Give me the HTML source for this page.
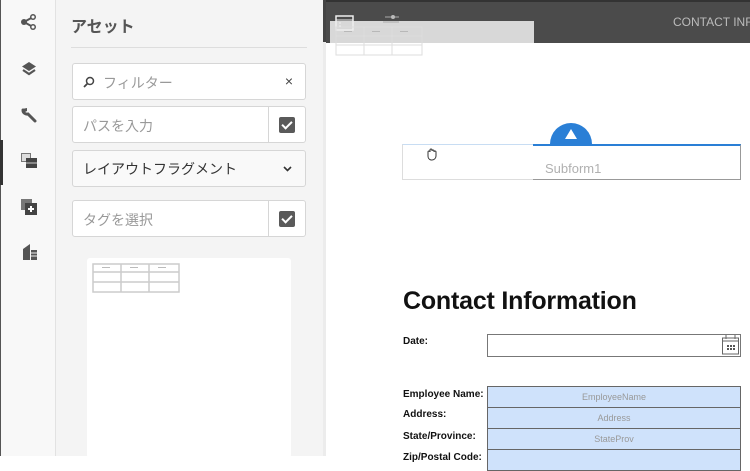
<!DOCTYPE html>
<html><head><meta charset="utf-8"><style>
*{margin:0;padding:0;box-sizing:border-box}
body{width:750px;height:456px;overflow:hidden;position:relative;background:#fff;font-family:"Liberation Sans","Noto Sans CJK JP",sans-serif}
.abs{position:absolute}
.rail{left:0;top:0;width:56px;height:456px;background:#f8f8f8;border-right:1px solid #e2e2e2;border-left:1px solid #555}
.panel{left:56px;top:0;width:267px;height:456px;background:#f4f4f4}
.box{position:absolute;left:72px;width:234px;background:#fff;border:1px solid #d6d6d6;border-radius:3px;font-size:14px;color:#999}
.chk{position:absolute;right:0;top:0;width:37px;height:100%;border-left:1px solid #d6d6d6}
.chk i{position:absolute;left:10px;top:10px;width:16px;height:16px;background:#5a5a5a;border-radius:2px}
.chk i:after{content:"";position:absolute;left:5px;top:2px;width:4px;height:8px;border:solid #fff;border-width:0 2px 2px 0;transform:rotate(45deg)}
.lbl{position:absolute;left:403px;font-size:10px;font-weight:bold;color:#111}
.fld{position:absolute;left:487px;width:254px;height:22px;background:#cfe2fb;border:1px solid #666;font-size:9px;color:#999;text-align:center;line-height:20px}
</style></head><body>
<div class="abs rail"></div>
<div class="abs" style="left:0;top:140px;width:3px;height:45px;background:#333"></div>
<svg class="abs" style="left:20px;top:13px" width="18" height="18" viewBox="0 0 18 18"><g fill="#555"><circle cx="4" cy="9" r="3"/><circle cx="13" cy="4" r="3"/><circle cx="13" cy="14" r="3"/></g><path d="M4 9L13 4M4 9L13 14" stroke="#555" stroke-width="2"/><circle cx="13" cy="4" r="1.5" fill="#f8f8f8"/><circle cx="13" cy="14" r="1.5" fill="#f8f8f8"/></svg>
<svg class="abs" style="left:20px;top:60px" width="18" height="18" viewBox="0 0 18 18"><path d="M9 2L16 6.5L9 11L2 6.5Z" fill="#555"/><path d="M3 10L9 14L15 10" stroke="#555" stroke-width="2.2" fill="none"/></svg>
<svg class="abs" style="left:20px;top:106px" width="18" height="18" viewBox="0 0 18 18"><path d="M3 4a4 4 0 0 0 5 4l7 7" stroke="#555" stroke-width="3" fill="none" stroke-linecap="round"/><path d="M2 3l3 3 2-1 0-3z" fill="#555"/></svg>
<svg class="abs" style="left:20px;top:151px" width="18" height="18" viewBox="0 0 18 18"><rect x="1" y="2" width="10" height="9" fill="#777"/><rect x="2" y="3" width="8" height="7" fill="#ddd"/><rect x="6" y="7" width="11" height="10" fill="#444"/><path d="M6 12H17" stroke="#ccc"/></svg>
<svg class="abs" style="left:20px;top:198px" width="18" height="18" viewBox="0 0 18 18"><rect x="1" y="1" width="11" height="11" fill="#777"/><rect x="5" y="5" width="12" height="12" fill="#444"/><path d="M11 8v6M8 11h6" stroke="#fff" stroke-width="2"/></svg>
<svg class="abs" style="left:22px;top:243px" width="16" height="18" viewBox="0 0 16 18"><path d="M1 6L8 1V17H1Z" fill="#555"/><rect x="9" y="7" width="6" height="10" fill="#555"/><path d="M9 10h6M9 13h6" stroke="#eee"/></svg>

<div class="abs panel"></div>
<div class="abs" style="left:71px;top:13px;font-size:16px;font-weight:bold;color:#555">アセット</div>
<div class="abs" style="left:71px;top:47px;width:236px;height:1px;background:#ddd"></div>
<div class="box" style="top:63px;height:37px">
 <svg class="abs" style="left:10px;top:12px" width="12" height="12" viewBox="0 0 12 12"><circle cx="7" cy="5" r="3.5" stroke="#444" stroke-width="1.5" fill="none"/><path d="M4.5 7.5L1 11" stroke="#444" stroke-width="1.8"/></svg>
 <span class="abs" style="left:30px;top:9px">フィルター</span>
 <span class="abs" style="right:12px;top:9px;color:#444;font-size:14px">×</span>
</div>
<div class="box" style="top:106px;height:37px"><span class="abs" style="left:10px;top:9px">パスを入力</span><div class="chk"><i></i></div></div>
<div class="box" style="top:150px;height:37px;color:#333;background:#f9f9f9"><span class="abs" style="left:10px;top:8px">レイアウトフラグメント</span>
 <svg class="abs" style="right:13px;top:15px" width="9" height="6" viewBox="0 0 9 6"><path d="M1 1l3.5 3.5L8 1" stroke="#333" stroke-width="1.6" fill="none"/></svg></div>
<div class="box" style="top:200px;height:37px"><span class="abs" style="left:10px;top:9px">タグを選択</span><div class="chk"><i></i></div></div>
<div class="abs" style="left:87px;top:258px;width:204px;height:200px;background:#fff;border-radius:3px"></div>
<svg class="abs" style="left:92px;top:263px" width="88" height="30"><g stroke="#ccc" stroke-width="1.5" fill="none"><rect x="1" y="1" width="86" height="28"/><path d="M1 9H87M1 19H87M29 1V29M57 1V29"/></g><g fill="#bbb"><rect x="10" y="4" width="8" height="1"/><rect x="38" y="4" width="8" height="1"/><rect x="66" y="4" width="8" height="1"/></g></svg>
<div class="abs" style="left:323px;top:0;width:3px;height:456px;background:#ececec"></div>
<div class="abs" style="left:323px;top:0;width:3px;height:42px;background:#444"></div>

<div class="abs" style="left:326px;top:0;width:424px;height:43px;background:#4b4b4b;border-top:2px solid #333"></div>
<div class="abs" style="left:330px;top:21px;width:204px;height:22px;background:#d8d8d8"></div>
<svg class="abs" style="left:335px;top:15px" width="90" height="42"><rect x="1" y="1" width="17" height="14" stroke="#eee" stroke-width="1.5" fill="none"/><path d="M1 5H18M4 8H6M4 11H6" stroke="#eee"/><path d="M50 2H64M48 7H64" stroke="#aaa"/><circle cx="58" cy="2" r="2" fill="#bbb"/><g stroke="#ddd" fill="none"><rect x="1" y="12" width="86" height="28"/><path d="M1 21H87M1 30H87M29 12V40M57 12V40"/></g><g fill="#aaa"><rect x="9" y="16" width="8" height="0.7"/><rect x="37" y="16" width="8" height="0.7"/><rect x="65" y="16" width="8" height="0.7"/></g></svg>
<div class="abs" style="left:673px;top:15px;font-size:12px;color:#bbb;white-space:nowrap">CONTACT INFO</div>

<div class="abs" style="left:402px;top:144px;width:339px;height:36px;border:1px solid #ddd;border-top:1px solid #c8ddf3"></div>
<div class="abs" style="left:533px;top:144px;width:208px;height:36px;border:1px solid #999;border-top:2px solid #2a7fd6;border-left:none"></div>
<div class="abs" style="left:550px;top:123px;width:42px;height:21px;background:#2a7fd6;border-radius:21px 21px 0 0"></div>
<svg class="abs" style="left:565px;top:129px" width="12" height="10"><path d="M6 0L12 10H0Z" fill="#fff"/></svg>
<div class="abs" style="left:545px;top:161px;font-size:13px;color:#b0b0b0">Subform1</div>
<svg class="abs" style="left:425px;top:147px" width="14" height="14"><path d="M3 8V5a1 1 0 0 1 2 0V3a1 1 0 0 1 2 0v1a1 1 0 0 1 2 0v1a1 1 0 0 1 2 0v4a4 4 0 0 1-4 4H6a4 4 0 0 1-3-4z" fill="#fff" stroke="#333"/></svg>

<div class="abs" style="left:403px;top:287px;font-size:25px;font-weight:bold;color:#111;letter-spacing:-0.2px">Contact Information</div>
<div class="lbl" style="top:336px">Date:</div>
<div class="abs" style="left:487px;top:334px;width:254px;height:23px;border:1px solid #777;background:#fff"></div>
<svg class="abs" style="left:721px;top:334px" width="19" height="22"><rect x="1.5" y="4" width="16" height="16" fill="#fff" stroke="#666"/><path d="M1.5 7H17.5M5 1V5M14 1V5" stroke="#666"/><g fill="#555"><rect x="6" y="11" width="2" height="2"/><rect x="9" y="11" width="2" height="2"/><rect x="12" y="11" width="2" height="2"/><rect x="6" y="14" width="2" height="2"/><rect x="9" y="14" width="2" height="2"/><rect x="12" y="14" width="2" height="2"/></g></svg>
<div class="lbl" style="top:389px">Employee Name:</div>
<div class="lbl" style="top:409px">Address:</div>
<div class="lbl" style="top:431px">State/Province:</div>
<div class="lbl" style="top:452px">Zip/Postal Code:</div>
<div class="fld" style="top:386px">EmployeeName</div>
<div class="fld" style="top:407px">Address</div>
<div class="fld" style="top:428px">StateProv</div>
<div class="fld" style="top:449px"></div>
</body></html>
